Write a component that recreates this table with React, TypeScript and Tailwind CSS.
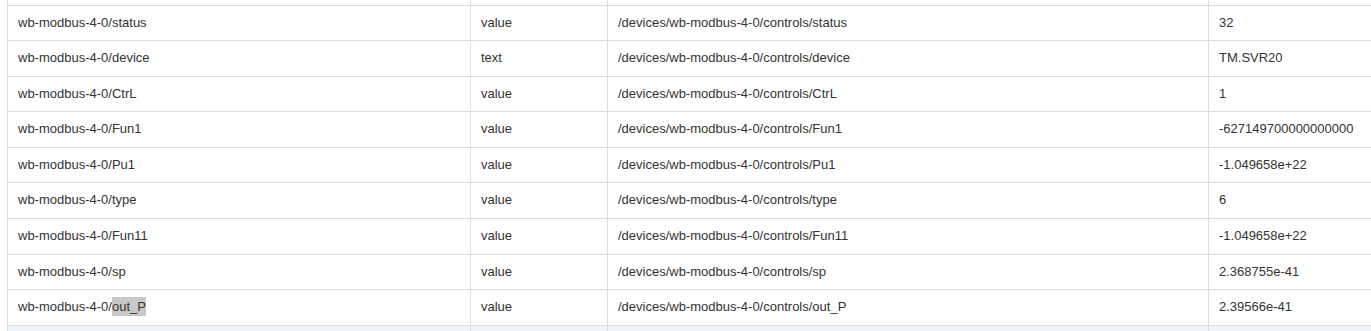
import React from "react";

type Row = { name: string; type: string; topic: string; value: string };

const rows: Row[] = [
  { name: "wb-modbus-4-0/status", type: "value", topic: "/devices/wb-modbus-4-0/controls/status", value: "32" },
  { name: "wb-modbus-4-0/device", type: "text", topic: "/devices/wb-modbus-4-0/controls/device", value: "TM.SVR20" },
  { name: "wb-modbus-4-0/CtrL", type: "value", topic: "/devices/wb-modbus-4-0/controls/CtrL", value: "1" },
  { name: "wb-modbus-4-0/Fun1", type: "value", topic: "/devices/wb-modbus-4-0/controls/Fun1", value: "-627149700000000000" },
  { name: "wb-modbus-4-0/Pu1", type: "value", topic: "/devices/wb-modbus-4-0/controls/Pu1", value: "-1.049658e+22" },
  { name: "wb-modbus-4-0/type", type: "value", topic: "/devices/wb-modbus-4-0/controls/type", value: "6" },
  { name: "wb-modbus-4-0/Fun11", type: "value", topic: "/devices/wb-modbus-4-0/controls/Fun11", value: "-1.049658e+22" },
  { name: "wb-modbus-4-0/sp", type: "value", topic: "/devices/wb-modbus-4-0/controls/sp", value: "2.368755e-41" },
];

const td = "border border-[#dddddd] px-[10px] py-2 align-top";

const App: React.FC = () => {
  return (
    <div
      className="bg-white pl-[7px] h-[331px] overflow-hidden text-[13px] leading-[1.42857] text-[#333333]"
      style={{ fontFamily: '"Liberation Sans", Arial, sans-serif' }}
    >
      <table className="w-[1372px] border-collapse table-fixed -mt-[31px]">
        <colgroup>
          <col className="w-[463px]" />
          <col className="w-[137px]" />
          <col className="w-[601px]" />
          <col />
        </colgroup>
        <tbody>
          <tr>
            <td className={td}>&nbsp;</td>
            <td className={td}>&nbsp;</td>
            <td className={td}>&nbsp;</td>
            <td className={td}>&nbsp;</td>
          </tr>
          {rows.map((r) => (
            <tr key={r.name}>
              <td className={td}>{r.name}</td>
              <td className={td}>{r.type}</td>
              <td className={td}>{r.topic}</td>
              <td className={td}>{r.value}</td>
            </tr>
          ))}
          <tr>
            <td className={td}>
              wb-modbus-4-0/<span className="bg-[#c8c8c8] py-[2px]">out_P</span>
            </td>
            <td className={td}>value</td>
            <td className={td}>/devices/wb-modbus-4-0/controls/out_P</td>
            <td className={td}>2.39566e-41</td>
          </tr>
          {/* next row is only a sliver at the bottom edge */}
          <tr className="bg-[#eef4fa]">
            <td className={td}>&nbsp;</td>
            <td className={td}>&nbsp;</td>
            <td className={td}>&nbsp;</td>
            <td className={td}>&nbsp;</td>
          </tr>
        </tbody>
      </table>
    </div>
  );
};

export default App;
